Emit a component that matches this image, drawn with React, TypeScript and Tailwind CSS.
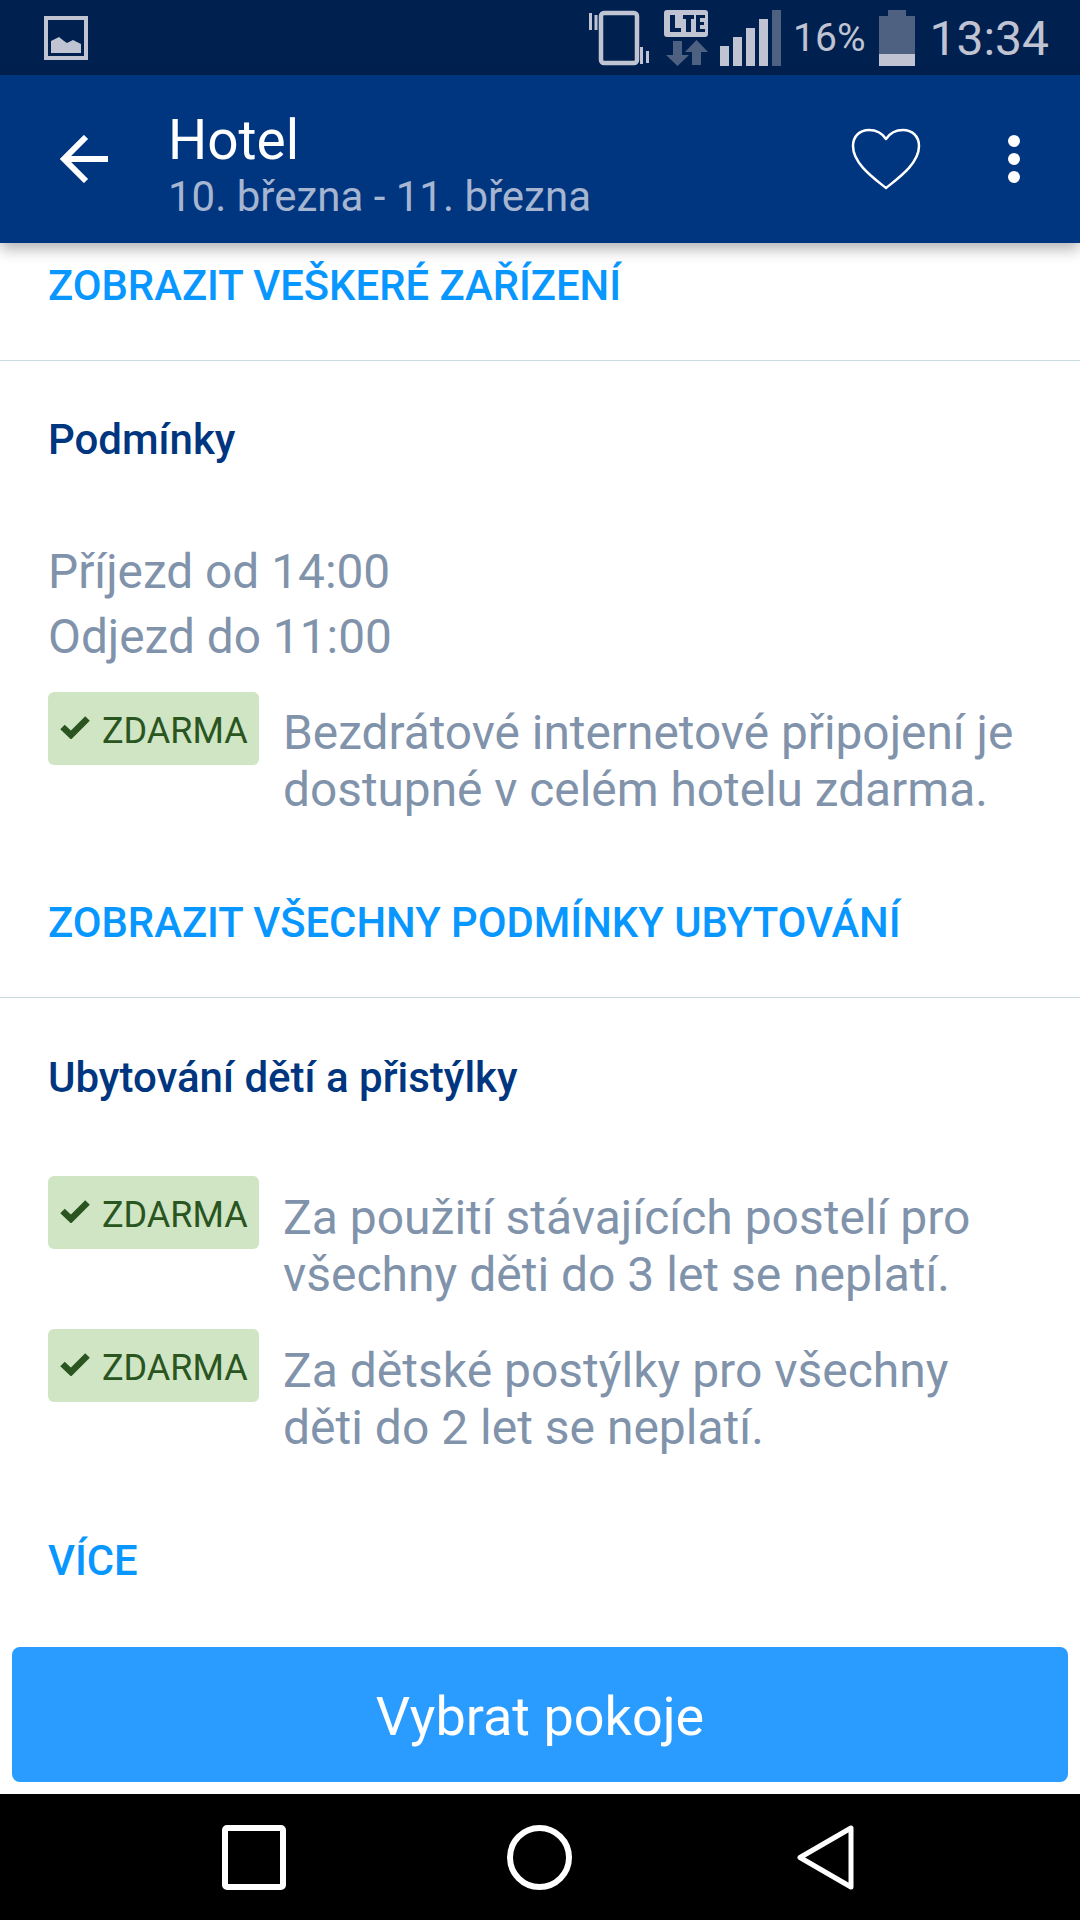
function StatusIcons() {
  return (
    <div className="flex items-center">
      {/* vibrate */}
      <svg width="61" height="56" viewBox="0 0 61 56" className="mr-[14px]">
        <rect x="12" y="3" width="36" height="50" rx="3" fill="none" stroke="#c0c4d2" strokeWidth="4.5" />
        <path d="M1.5 3v17M7 5v15M52.5 37v17M58.500 41v12" fill="none" stroke="#c0c4d2" strokeWidth="3" />
      </svg>
      {/* LTE + data arrows */}
      <svg width="44" height="56" viewBox="0 0 44 56" className="mr-[12px]">
        <rect x="0" y="0" width="44" height="27" rx="3" fill="#c0c4d2" />
        <path d="M6 5h5v13h6v4H6zM19 5h11v4h-3v13h-5V9h-3zM32 5h9v3h-5v4h4v3h-4v4h5v3h-9z" fill="#002050" />
        <path d="M9 31h9v14h7L13.500 56 2 45h7z" fill="#4f6180" />
        <path d="M28 55h9V42h7L32.500 30 21 42h7z" fill="#4f6180" />
      </svg>
      {/* signal */}
      <svg width="61" height="56" viewBox="0 0 61 56" className="mr-[12px]">
        <rect x="0" y="36" width="9" height="20" fill="#c0c4d2" />
        <rect x="13" y="27" width="9" height="29" fill="#c0c4d2" />
        <rect x="26" y="18" width="9" height="38" fill="#c0c4d2" />
        <rect x="39" y="9" width="9" height="47" fill="#c0c4d2" />
        <rect x="52" y="0" width="9" height="56" fill="#4f6180" />
      </svg>
      <span className="mr-[14px] pt-[2px] text-[39px] leading-none text-[#c0c4d2]">16%</span>
      {/* battery */}
      <svg width="36" height="56" viewBox="0 0 36 56" className="mr-[14px]">
        <path d="M9 0h18v6h9v38H0V6h9z" fill="#4f6180" />
        <rect x="0" y="44" width="36" height="12" fill="#c0c4d2" />
      </svg>
      <span className="pt-[2px] text-[48px] leading-none text-[#c0c4d2]">13:34</span>
    </div>
  );
}

function StatusBar() {
  return (
    <div className="flex h-[75px] shrink-0 items-center justify-between bg-[#00204f] pl-[44px] pr-[31px]">
      <svg width="44" height="44" viewBox="0 0 44 44">
        <rect x="2" y="2" width="40" height="40" fill="none" stroke="#c0c4d2" strokeWidth="4" />
        <path d="M7 37V25l8-4 5 4 3 2 6-3 8 4v9z" fill="#c0c4d2" />
      </svg>
      <StatusIcons />
    </div>
  );
}

function Header() {
  return (
    <header className="relative z-10 flex h-[168px] shrink-0 items-center bg-[#003580] shadow-[0_6px_14px_rgba(0,0,0,0.3)]">
      <svg width="48" height="48" viewBox="0 0 48 48" className="ml-[60px]">
        <path d="M48 24H4M26 2L4 24l22 22" fill="none" stroke="#fff" strokeWidth="6" />
      </svg>
      <div className="ml-[60px] flex-1 pt-[11px]">
        <div className="text-[55px] leading-[64px] text-white">Hotel</div>
        <div className="text-[42px] leading-[50px] text-[#a6b6d0]">10. března - 11. března</div>
      </div>
      <svg width="70" height="62" viewBox="0 0 70 62" className="mr-[87px]">
        <path
          d="M35 60C24 51 2 36 2 18 2 8 9 2 18 2c7 0 13 3 17 9C39 5 45 2 52 2c9 0 16 6 16 16 0 18-22 33-33 42z"
          fill="none"
          stroke="#fff"
          strokeWidth="2.500"
          strokeLinejoin="round"
        />
      </svg>
      <div className="mr-[60px] flex flex-col gap-[6px]">
        <span className="h-3 w-3 rounded-full bg-white" />
        <span className="h-3 w-3 rounded-full bg-white" />
        <span className="h-3 w-3 rounded-full bg-white" />
      </div>
    </header>
  );
}

function LinkText({ children, className }: { children: React.ReactNode; className?: string }) {
  return <div className={`text-[41.800px] leading-[48px] font-medium text-[#0896ff] ${className ?? ''}`}>{children}</div>;
}

function Heading({ children, className }: { children: React.ReactNode; className?: string }) {
  return <div className={`text-[42px] leading-[48px] font-medium text-[#003580] ${className ?? ''}`}>{children}</div>;
}

function FreeRow({ text, className, textSize }: { text: React.ReactNode; className?: string; textSize: string }) {
  return (
    <div className={`flex items-start ${className ?? ''}`}>
      <div className="flex h-[73px] w-[211px] shrink-0 items-center rounded-[6px] bg-[#cfe5c4] pl-[12px] text-[36px] text-[#2a5520]">
        <svg width="30" height="24" viewBox="0 0 30 24" className="mr-[12px] mb-[4px]">
          <path d="M2.500 12l8.500 8L27.500 3.500" fill="none" stroke="#2a5520" strokeWidth="6.500" />
        </svg>
        <span className="pt-[4px]">ZDARMA</span>
      </div>
      <div className={`ml-[24px] pt-[13px] leading-[57px] text-[#8093ab] ${textSize}`}>{text}</div>
    </div>
  );
}

export default function App() {
  return (
    <div className="flex h-[1920px] w-[1080px] flex-col overflow-hidden bg-white font-[family-name:Roboto,sans-serif]">
      <StatusBar />
      <Header />
      <main className="flex-1">
        <div className="px-[48px] pt-[19px] pb-[50px]">
          <LinkText>ZOBRAZIT VEŠKERÉ ZAŘÍZENÍ</LinkText>
        </div>
        <div className="h-px bg-[#c9dae2]" />
        <div className="px-[48px] pt-[55px] pb-[50px]">
          <Heading>Podmínky</Heading>
          <div className="mt-[76px] text-[47.800px] leading-[65px] text-[#8093ab]">
            <div>Příjezd od 14:00</div>
            <div>Odjezd do 11:00</div>
          </div>
          <FreeRow
            className="mt-[22px]"
            textSize="text-[47.800px]"
            text={
              <>
                Bezdrátové internetové připojení je
                <br />
                dostupné v celém hotelu zdarma.
              </>
            }
          />
          <LinkText className="mt-[80px]">ZOBRAZIT VŠECHNY PODMÍNKY UBYTOVÁNÍ</LinkText>
        </div>
        <div className="h-px bg-[#c9dae2]" />
        <div className="px-[48px] pt-[56px]">
          <Heading>Ubytování dětí a přistýlky</Heading>
          <FreeRow
            className="mt-[74px]"
            textSize="text-[48px]"
            text={
              <>
                Za použití stávajících postelí pro
                <br />
                všechny děti do 3 let se neplatí.
              </>
            }
          />
          <FreeRow
            className="mt-[26px]"
            textSize="text-[48px]"
            text={
              <>
                Za dětské postýlky pro všechny
                <br />
                děti do 2 let se neplatí.
              </>
            }
          />
          <LinkText className="mt-[81px]">VÍCE</LinkText>
        </div>
      </main>
      <div className="shrink-0 px-[12px] pb-[12px]">
        <button className="flex h-[135px] w-full items-center justify-center rounded-[8px] bg-[#2b9cff] pt-[4px] text-[54px] text-white">
          Vybrat pokoje
        </button>
      </div>
      <nav className="flex h-[126px] shrink-0 items-center bg-black pl-[222px]">
        <svg width="64" height="65" viewBox="0 0 64 65">
          <rect x="3" y="3" width="58" height="59" rx="2" fill="none" stroke="#fff" strokeWidth="6" />
        </svg>
        <svg width="65" height="65" viewBox="0 0 65 65" className="ml-[221px]">
          <circle cx="32.500" cy="32.500" r="29.500" fill="none" stroke="#fff" strokeWidth="6" />
        </svg>
        <svg width="57" height="65" viewBox="0 0 57 65" className="ml-[225px]">
          <path d="M54 3v59L3 32.500z" fill="none" stroke="#fff" strokeWidth="5" strokeLinejoin="round" />
        </svg>
      </nav>
    </div>
  );
}
